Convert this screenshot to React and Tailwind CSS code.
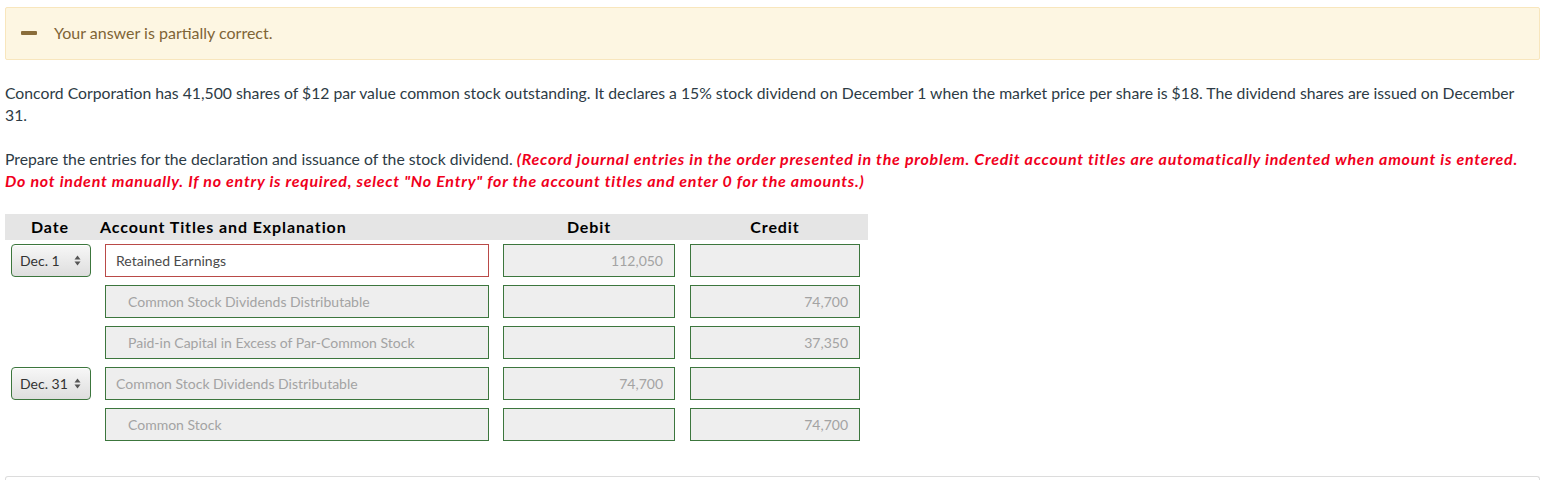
import { useState } from "react";

const rows = [
  { date: "Dec. 1", account: "Retained Earnings", debit: "112,050", credit: "", indent: false, wrong: true },
  { date: "", account: "Common Stock Dividends Distributable", debit: "", credit: "74,700", indent: true },
  { date: "", account: "Paid-in Capital in Excess of Par-Common Stock", debit: "", credit: "37,350", indent: true },
  { date: "Dec. 31", account: "Common Stock Dividends Distributable", debit: "74,700", credit: "", indent: false },
  { date: "", account: "Common Stock", debit: "", credit: "74,700", indent: true },
];

function DateSelect({ value }) {
  return (
    <div className="flex h-[33px] w-[80px] items-center justify-between rounded-[4px] border border-[#3c763d] bg-gradient-to-b from-[#f7f7f7] to-[#dedede] pl-[8px] pr-[9px] text-[14px] text-[#333] shadow-[inset_0_1px_0_#fff]">
      <span>{value}</span>
      <svg width="7" height="11" viewBox="0 0 7 11" className="text-[#555]">
        <path d="M3.5 0.5 L6.5 4.5 H0.5 Z" fill="currentColor" />
        <path d="M3.5 10.5 L6.5 6.5 H0.5 Z" fill="currentColor" />
      </svg>
    </div>
  );
}

function Field({ children, align = "left", border = "green", white = false, dark = false, indent = false }) {
  return (
    <div
      className={
        "flex h-[33px] w-full items-center border text-[14px] " +
        (border === "red" ? "border-[#b94a48] " : "border-[#3c763d] ") +
        (white ? "bg-white " : "bg-[#eeeeee] ") +
        (dark ? "text-[#4a4a4a] " : "text-[#a3a3a3] ") +
        (align === "right" ? "justify-end pr-[11px] " : indent ? "pl-[22px] " : "pl-[10px] ")
      }
    >
      {children}
    </div>
  );
}

export default function App() {
  const [open] = useState(true);

  return (
    <div className="min-h-[480px] bg-white pl-[5px] pr-[2px] pt-[7px] font-['Lato','Noto_Sans',sans-serif] text-[15.75px] text-[#2d3b45]">
      {/* feedback banner */}
      <div className="flex h-[53px] items-center rounded-[2px] border border-[#f8e6bd] bg-[#fdf6e2] pb-[2px] pl-[15px]">
        <span className="h-[4px] w-[16px] rounded-[1px] bg-[#8a6d3b]" />
        <span className="ml-[17px] text-[16px] text-[#7f6436]">Your answer is partially correct.</span>
      </div>

      <p className="mt-[22px] pr-[20px] leading-[22px]">
        Concord Corporation has 41,500 shares of $12 par value common stock outstanding. It declares a 15% stock dividend on December 1 when the market price per share is $18. The dividend shares are issued on December 31.
      </p>

      <p className="mt-[22px] pr-[20px] leading-[22px]">
        Prepare the entries for the declaration and issuance of the stock dividend.{" "}
        <span className="text-[16px] font-bold italic tracking-[0.75px] text-[#f0001c]">
          (Record journal entries in the order presented in the problem. Credit account titles are automatically indented when amount is entered. Do not indent manually. If no entry is required, select "No Entry" for the account titles and enter 0 for the amounts.)
        </span>
      </p>

      {open && (
        <div className="mt-[22px] w-[863px]">
          <div className="grid h-[26px] grid-cols-[90px_401px_186px_186px] items-center bg-[#e5e5e5] text-[16px] font-bold tracking-[0.9px] text-black">
            <div className="text-center">Date</div>
            <div className="pl-[5px]">Account Titles and Explanation</div>
            <div className="text-center">Debit</div>
            <div className="text-center">Credit</div>
          </div>
          <div className="mt-[4px] flex flex-col gap-[8px]">
            {rows.map((r, i) => (
              <div key={i} className="grid grid-cols-[90px_401px_186px_186px]">
                <div className="pl-[6px]">{r.date && <DateSelect value={r.date} />}</div>
                <div className="pl-[10px] pr-[7px]">
                  <Field border={r.wrong ? "red" : "green"} white={r.wrong} dark={r.wrong} indent={r.indent}>
                    {r.account}
                  </Field>
                </div>
                <div className="pl-[7px] pr-[7px]">
                  <Field align="right">{r.debit}</Field>
                </div>
                <div className="pl-[8px] pr-[8px]">
                  <Field align="right">{r.credit}</Field>
                </div>
              </div>
            ))}
          </div>
        </div>
      )}

      <div className="mt-[35px] h-[10px] rounded-t-[3px] border border-b-0 border-[#dcdcdc]" />
    </div>
  );
}
